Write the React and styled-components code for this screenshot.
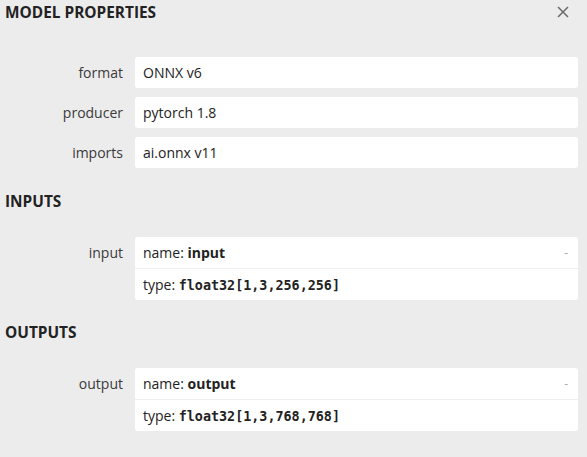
import React from "react"
import styled, { createGlobalStyle } from "styled-components"

const GlobalStyle = createGlobalStyle`
  html, body {
    margin: 0;
    padding: 0;
    background: #ececec;
  }
  body {
    font-family: "Open Sans", "Noto Sans", sans-serif;
    color: #222;
  }
`

const properties = [
  { name: "format", value: "ONNX v6" },
  { name: "producer", value: "pytorch 1.8" },
  { name: "imports", value: "ai.onnx v11" },
]

const sections = [
  { title: "INPUTS", top: 24, items: [{ name: "input", type: "float32[1,3,256,256]" }] },
  { title: "OUTPUTS", top: 23, items: [{ name: "output", type: "float32[1,3,768,768]" }] },
]

const Sidebar = styled.div`
  width: 587px;
  height: 457px;
  overflow: hidden;
  background: #ececec;
  display: flex;
  flex-direction: column;
`
const Header = styled.div`
  display: flex;
  justify-content: space-between;
  align-items: center;
  padding: 3px 18px 0 5px;
  height: 20px;
`
const Title = styled.div`
  font-size: 15.4px;
  line-height: 20px;
  font-weight: 700;
  color: #222;
`
const Close = styled.button`
  border: 0;
  background: none;
  padding: 0;
  width: 12px;
  height: 12px;
  display: flex;
  margin-top: -3px;
  cursor: pointer;
`
const SectionTitle = styled.div`
  font-size: 15.4px;
  line-height: 20px;
  font-weight: 700;
  color: #222;
  padding-left: 5px;
  margin: ${p => p.$top}px 0 25px;
`
const List = styled.div`
  display: flex;
  flex-direction: column;
  gap: 9px;
  margin-top: ${p => p.$top || 0}px;
`
const Row = styled.div`
  display: grid;
  grid-template-columns: 123px 1fr;
  column-gap: 12px;
  margin-right: 9px;
  align-items: start;
`
const Label = styled.div`
  text-align: right;
  font-size: 14px;
  line-height: 31px;
  color: #3a3a3a;
`
const ValueBox = styled.div`
  background: #fff;
  border-radius: 3px;
  display: flex;
  flex-direction: column;
`
const ValueLine = styled.div`
  display: flex;
  align-items: center;
  justify-content: space-between;
  height: 31px;
  padding: 0 10px 0 8px;
  font-size: 14px;
  color: #222;
  & + & {
    border-top: 1px solid #efefef;
  }
`
const Strong = styled.b`
  font-weight: 700;
`
const Code = styled.code`
  font-family: "DejaVu Sans Mono", "Liberation Mono", monospace;
  font-weight: 700;
  font-size: 13.4px;
`
const Toggle = styled.span`
  color: #aaa;
  font-size: 12px;
`

const CloseIcon = () => (
  <svg width="12" height="12" viewBox="0 0 12 12">
    <path d="M1 1L11 11M11 1L1 11" stroke="#6a6a6a" strokeWidth="1.5" fill="none" />
  </svg>
)

const App = () => (
  <Sidebar>
    <GlobalStyle />
    <Header>
      <Title>MODEL PROPERTIES</Title>
      <Close><CloseIcon /></Close>
    </Header>
    <List $top={34}>
      {properties.map(p => (
        <Row key={p.name}>
          <Label>{p.name}</Label>
          <ValueBox>
            <ValueLine>{p.value}</ValueLine>
          </ValueBox>
        </Row>
      ))}
    </List>
    {sections.map(s => (
      <React.Fragment key={s.title}>
        <SectionTitle $top={s.top}>{s.title}</SectionTitle>
        <List>
          {s.items.map(item => (
            <Row key={item.name}>
              <Label>{item.name}</Label>
              <ValueBox>
                <ValueLine>
                  <span>name: <Strong>{item.name}</Strong></span>
                  <Toggle>-</Toggle>
                </ValueLine>
                <ValueLine>
                  <span>type: <Code>{item.type}</Code></span>
                </ValueLine>
              </ValueBox>
            </Row>
          ))}
        </List>
      </React.Fragment>
    ))}
  </Sidebar>
)

export default App
